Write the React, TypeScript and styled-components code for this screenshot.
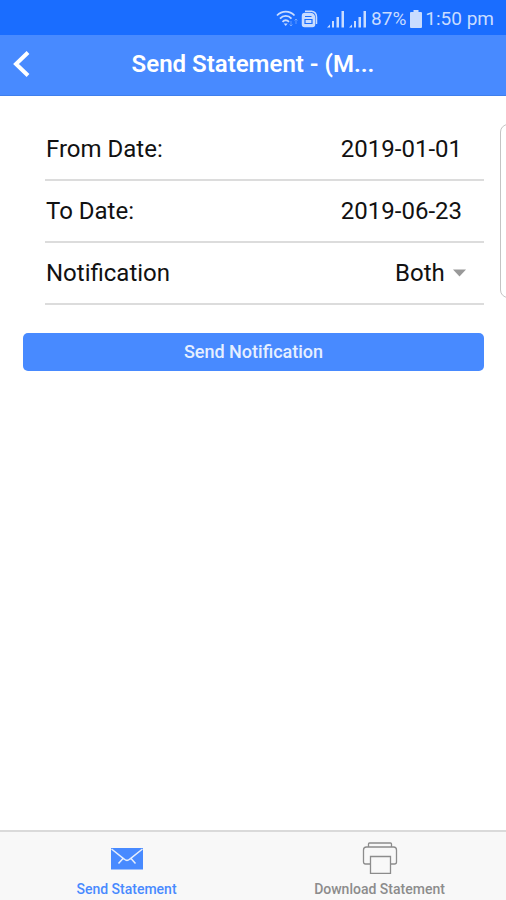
import React from "react";
import styled, { createGlobalStyle } from "styled-components";

const GlobalStyle = createGlobalStyle`
  *, *::before, *::after { box-sizing: border-box; }
  body {
    margin: 0;
    background: #fff;
    color: #111;
    font-family: Roboto, "Liberation Sans", sans-serif;
  }
  button, input, select { font: inherit; color: inherit; }
`;

const Screen = styled.div`
  display: flex;
  flex-direction: column;
  min-height: 100vh;
`;

const StatusBar = styled.div`
  display: flex;
  align-items: center;
  justify-content: flex-end;
  height: 35px;
  padding: 2px 12px 0 0;
  background: #1a6dff;
  color: #c9dcff;
  font-size: 19px;
  line-height: 24px;
`;

const StatusItem = styled.span<{ $gap?: number }>`
  display: flex;
  margin-left: ${({ $gap = 4 }) => $gap}px;
`;

const Header = styled.header`
  display: grid;
  grid-template-columns: 44px 1fr 44px;
  align-items: center;
  height: 61px;
  padding-bottom: 2px;
  background: #488aff;
  border-bottom: 1px solid #3f7fec;
  color: #fff;
`;

const BackButton = styled.button`
  display: flex;
  align-items: center;
  height: 44px;
  padding: 0 0 0 12px;
  border: 0;
  background: none;
`;

const Title = styled.h1`
  margin: 0;
  overflow: hidden;
  font-size: 24px;
  line-height: 28px;
  font-weight: 600;
  text-align: center;
  white-space: nowrap;
`;

const Slides = styled.main`
  display: grid;
  grid-template-columns: calc(100% - 6px) 100%;
  align-items: start;
  flex: 1;
  padding-top: 23px;
  overflow: hidden;
`;

const StatementForm = styled.form`
  padding: 0 16px 0 23px;
`;

const NextSlide = styled.div`
  height: 174px;
  margin-top: 5px;
  border: 1px solid #c4c4c4;
  border-radius: 8px;
`;

const Fields = styled.div`
  padding-left: 22px;
`;

const Field = styled.div`
  display: flex;
  align-items: center;
  justify-content: space-between;
  height: 62px;
  padding: 0 22px 0 1px;
  border-bottom: 2px solid #dcdcdc;
  font-size: 24px;
  line-height: 28px;
`;

const DateInput = styled.input`
  width: 140px;
  padding: 0;
  border: 0;
  background: none;
  text-align: right;
`;

const SelectWrap = styled.div`
  display: flex;
  align-items: center;
  gap: 8px;
  margin-right: -4px;
`;

const Select = styled.select`
  appearance: none;
  padding: 0;
  border: 0;
  background: none;
`;

const SubmitButton = styled.button`
  display: block;
  width: 100%;
  height: 38px;
  margin-top: 28px;
  padding: 0;
  border: 0;
  border-radius: 5px;
  background: #488aff;
  color: #e6efff;
  font-size: 18px;
  font-weight: 500;
  line-height: 20px;
`;

const TabBar = styled.nav`
  display: flex;
  height: 70px;
  border-top: 2px solid #dadada;
  background: #f8f8f8;
`;

const Tab = styled.a<{ $active?: boolean }>`
  display: flex;
  flex: 1;
  flex-direction: column;
  align-items: center;
  gap: 7px;
  padding-top: 7px;
  color: ${({ $active }) => ($active ? "#488aff" : "#8c8c8c")};
  font-size: 14px;
  font-weight: 500;
  line-height: 16px;
  text-decoration: none;
`;

const WifiIcon = () => (
  <svg width="24" height="20" viewBox="0 0 24 20" fill="none" stroke="currentColor" strokeWidth="1.800" aria-hidden="true">
    <path d="M1 6.500C6 1.300 13.500 1.300 18.500 6.500M4 9.700C7.300 6 12.200 6 15.500 9.700M6.500 12.800C8.500 10.700 11 10.700 13 12.800" />
    <path d="M7.700 14.500L9.700 17L11.700 14.500Z" fill="currentColor" stroke="none" />
    <path d="M15 12V17M13.500 15.500L15 17L16.500 15.500M20 15V10M18.500 11.500L20 10L21.500 11.500" strokeWidth="1" opacity="0.4" />
  </svg>
);

const CardsIcon = () => (
  <svg width="17" height="18" viewBox="0 0 17 18" fill="none" stroke="currentColor" aria-hidden="true">
    <path d="M4 1.200H10.500Q15.500 2 15.500 7V14" strokeWidth="1.500" />
    <path d="M1.500 6Q1.500 3.500 4 3.500H9.500Q13.500 4 13.500 8V14.500Q13.500 16.500 11.500 16.500H3.500Q1.500 16.500 1.500 14.500Z" fill="currentColor" strokeWidth="1.500" />
    <path d="M4 6.500H10.500M4 9.500H11V13.500H4Z" stroke="#1a6dff" strokeWidth="1.200" />
  </svg>
);

const SignalIcon = () => (
  <svg width="18" height="18" viewBox="0 0 18 18" fill="currentColor" aria-hidden="true">
    <path d="M0 17.500L3 14.500V17.500ZM5 11H7V17.500H5ZM9.500 7H12V17.500H9.500ZM14.500 1H17V17.500H14.500Z" />
  </svg>
);

const BatteryIcon = () => (
  <svg width="12" height="18" viewBox="0 0 12 18" fill="currentColor" aria-hidden="true">
    <path d="M3.500 0H8.500V2H11Q12 2 12 3V17Q12 18 11 18H1Q0 18 0 17V3Q0 2 1 2H3.500Z" />
  </svg>
);

const BackIcon = () => (
  <svg width="19" height="28" viewBox="0 0 19 28" fill="none" stroke="currentColor" strokeWidth="4" aria-hidden="true">
    <path d="M16 2.500L4 14L16 25.500" />
  </svg>
);

const CaretIcon = () => (
  <svg width="13" height="8" viewBox="0 0 13 8" fill="#999" aria-hidden="true">
    <path d="M0 0.500H13L6.500 7.500Z" />
  </svg>
);

const MailIcon = () => (
  <svg width="34" height="35" viewBox="0 0 34 35" aria-hidden="true">
    <path d="M1 9H33V30.500H1Z" fill="currentColor" />
    <path d="M1.500 10L14.500 20.300Q17 22.500 19.500 20.300L32.500 10M8.500 24.500L13.200 19.300M25.500 24.500L20.800 19.300" fill="none" stroke="#e6eefc" strokeWidth="1.500" />
  </svg>
);

const PrinterIcon = () => (
  <svg width="36" height="35" viewBox="0 0 36 35" fill="none" stroke="currentColor" strokeWidth="1.300" aria-hidden="true">
    <path d="M6.500 8V5Q6.500 4 7.500 4H28.500Q29.500 4 29.500 5V8" />
    <path d="M8.500 25H3.500Q1.500 25 1.500 23V11Q1.500 8 4.500 8H31.500Q34.500 8 34.500 11V23Q34.500 25 32.500 25H28.500" />
    <path d="M8.500 17.500H28.500V34.300H8.500Z" />
  </svg>
);

export default function App() {
  return (
    <Screen>
      <GlobalStyle />
      <StatusBar>
        <StatusItem><WifiIcon /></StatusItem>
        <StatusItem $gap={1}><CardsIcon /></StatusItem>
        <StatusItem $gap={9}><SignalIcon /></StatusItem>
        <StatusItem><SignalIcon /></StatusItem>
        <StatusItem>87%</StatusItem>
        <StatusItem><BatteryIcon /></StatusItem>
        <StatusItem $gap={3}>1:50 pm</StatusItem>
      </StatusBar>
      <Header>
        <BackButton type="button" aria-label="Back"><BackIcon /></BackButton>
        <Title>Send Statement - (M...</Title>
      </Header>
      <Slides>
        <StatementForm onSubmit={(event) => event.preventDefault()}>
          <Fields>
            <Field>
              <label htmlFor="from-date">From Date:</label>
              <DateInput id="from-date" defaultValue="2019-01-01" />
            </Field>
            <Field>
              <label htmlFor="to-date">To Date:</label>
              <DateInput id="to-date" defaultValue="2019-06-23" />
            </Field>
            <Field>
              <label htmlFor="notification">Notification</label>
              <SelectWrap>
                <Select id="notification" defaultValue="both">
                  <option value="both">Both</option>
                </Select>
                <CaretIcon />
              </SelectWrap>
            </Field>
          </Fields>
          <SubmitButton type="submit">Send Notification</SubmitButton>
        </StatementForm>
        <NextSlide />
      </Slides>
      <TabBar>
        <Tab href="#send" $active aria-current="page">
          <MailIcon />
          Send Statement
        </Tab>
        <Tab href="#download">
          <PrinterIcon />
          Download Statement
        </Tab>
      </TabBar>
    </Screen>
  );
}
